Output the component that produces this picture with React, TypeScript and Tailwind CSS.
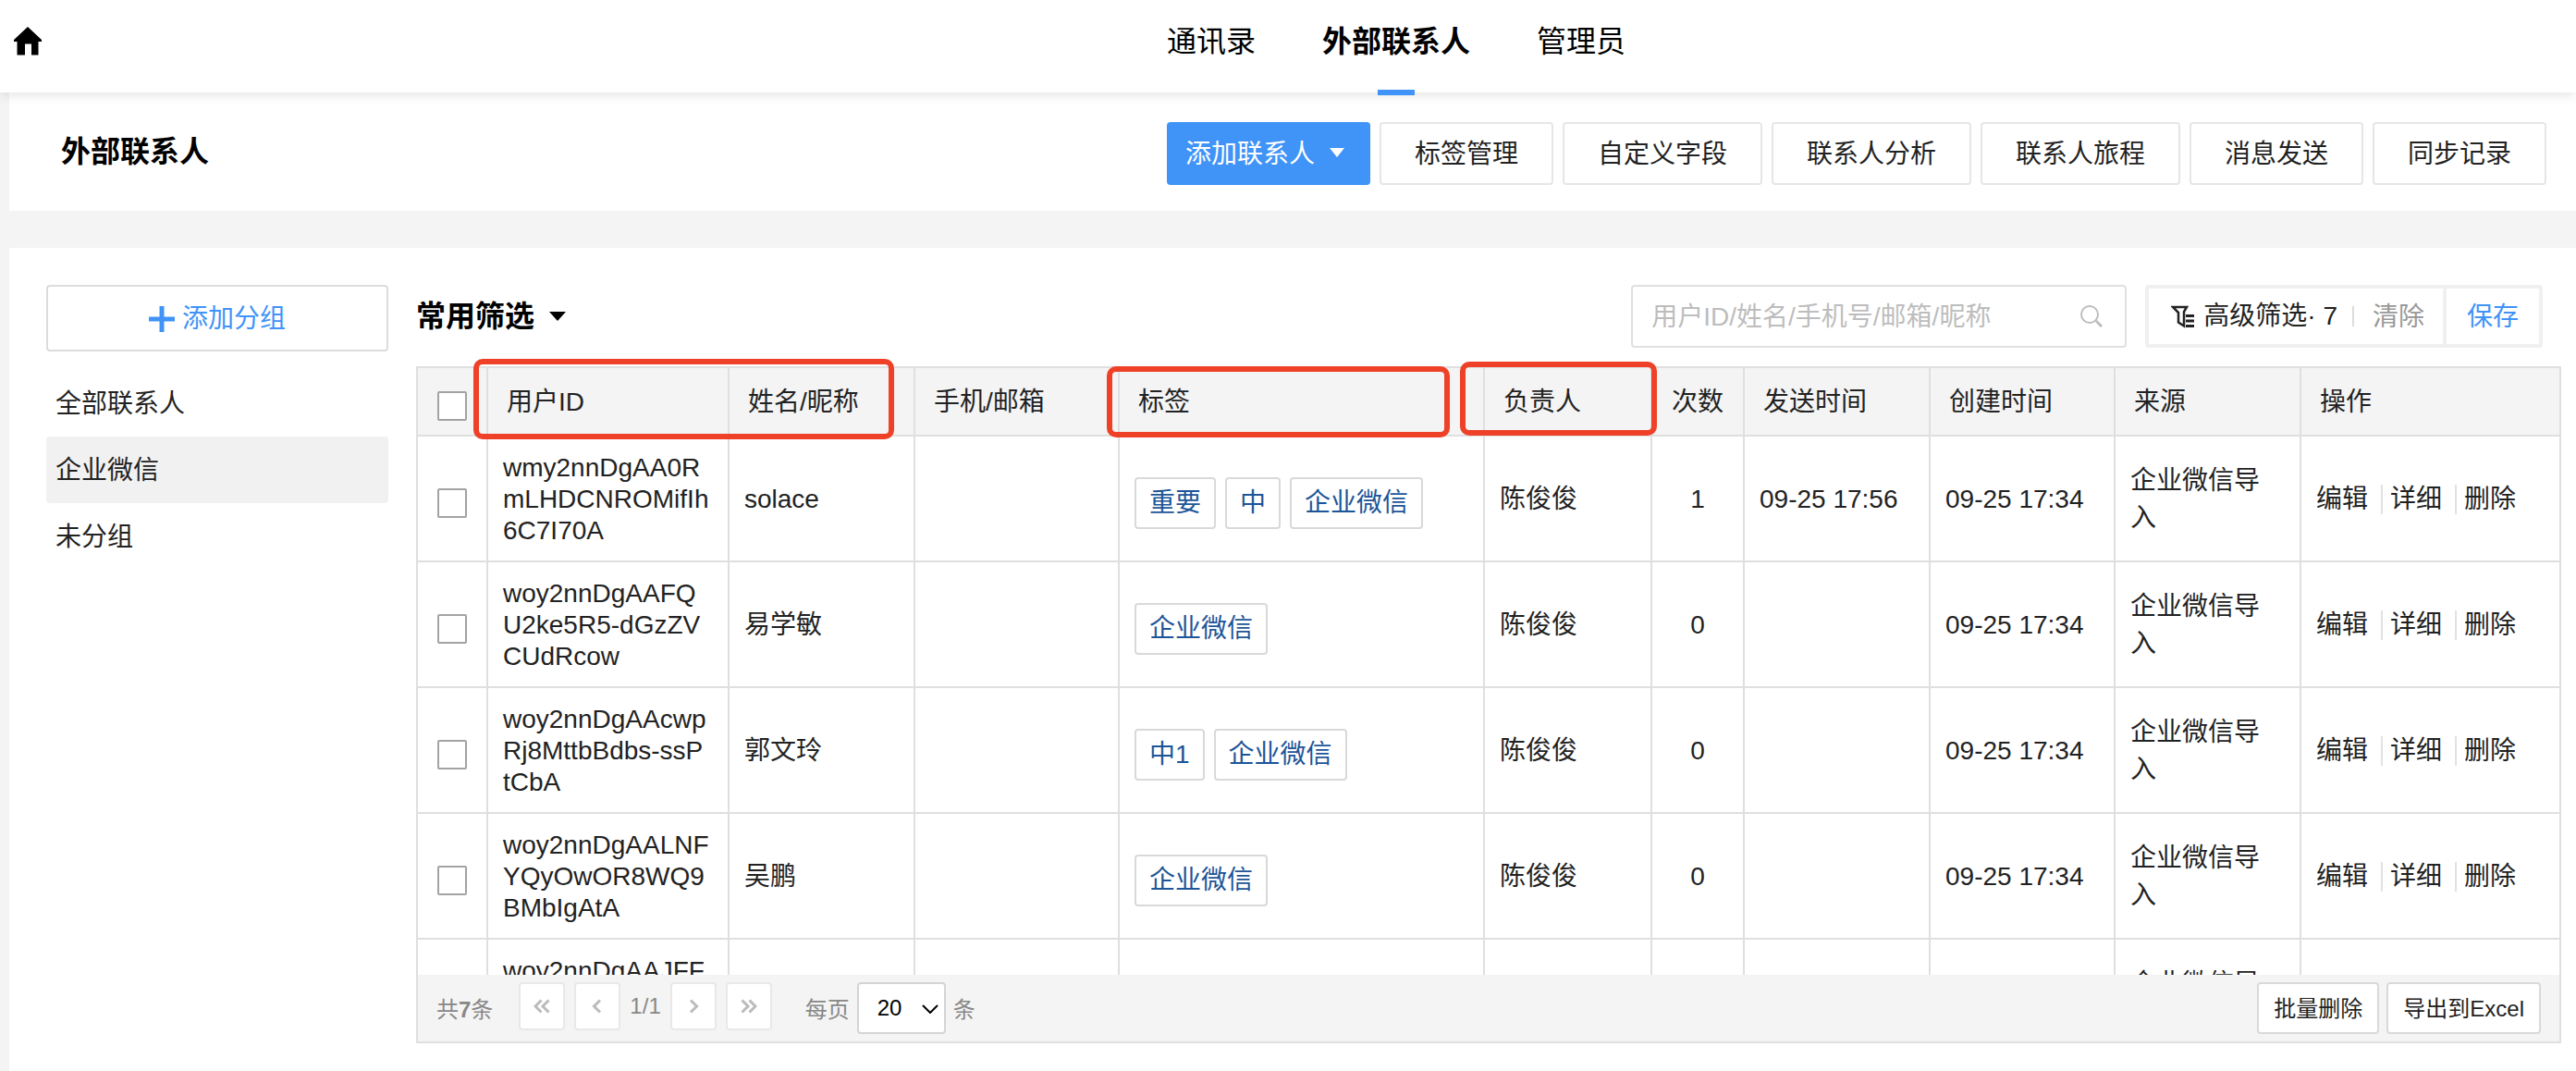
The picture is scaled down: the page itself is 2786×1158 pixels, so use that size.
import type { ReactNode } from 'react';

interface Contact {
  id: string;
  name: string;
  tags: string[];
  owner: string;
  count: number;
  sentAt: string;
  createdAt: string;
  source: string;
}

const tabs = ['通讯录', '外部联系人', '管理员'];
const toolbar = ['标签管理', '自定义字段', '联系人分析', '联系人旅程', '消息发送', '同步记录'];
const groups = ['全部联系人', '企业微信', '未分组'];
const actions = ['编辑', '详细', '删除'];

const columns = [
  { label: '用户ID', width: 'w-[261px]' },
  { label: '姓名/昵称', width: 'w-[201px]' },
  { label: '手机/邮箱', width: 'w-[221px]' },
  { label: '标签', width: '' },
  { label: '负责人', width: 'w-[181px]' },
  { label: '次数', width: 'w-[100px]' },
  { label: '发送时间', width: 'w-[201px]' },
  { label: '创建时间', width: 'w-[200px]' },
  { label: '来源', width: 'w-[201px]' },
  { label: '操作', width: 'w-[279px]' },
];

const contacts: Contact[] = [
  {
    id: 'wmy2nnDgAA0RmLHDCNROMifIh6C7I70A',
    name: 'solace',
    tags: ['重要', '中', '企业微信'],
    owner: '陈俊俊',
    count: 1,
    sentAt: '09-25 17:56',
    createdAt: '09-25 17:34',
    source: '企业微信导入',
  },
  {
    id: 'woy2nnDgAAFQU2ke5R5-dGzZVCUdRcow',
    name: '易学敏',
    tags: ['企业微信'],
    owner: '陈俊俊',
    count: 0,
    sentAt: '',
    createdAt: '09-25 17:34',
    source: '企业微信导入',
  },
  {
    id: 'woy2nnDgAAcwpRj8MttbBdbs-ssPtCbA',
    name: '郭文玲',
    tags: ['中1', '企业微信'],
    owner: '陈俊俊',
    count: 0,
    sentAt: '',
    createdAt: '09-25 17:34',
    source: '企业微信导入',
  },
  {
    id: 'woy2nnDgAALNFYQyOwOR8WQ9BMbIgAtA',
    name: '吴鹏',
    tags: ['企业微信'],
    owner: '陈俊俊',
    count: 0,
    sentAt: '',
    createdAt: '09-25 17:34',
    source: '企业微信导入',
  },
  {
    id: 'woy2nnDgAAJFFQk3WcT8nVb5RmZyLd7A',
    name: '',
    tags: [],
    owner: '',
    count: 0,
    sentAt: '',
    createdAt: '',
    source: '企业微信导入',
  },
];

function Header() {
  return (
    <header className="relative z-10 flex h-[100px] shrink-0 bg-white shadow-[0_2px_12px_rgba(0,0,0,0.12)]">
      <div className="w-[234px] pt-[29px] pl-[15px]">
        <a href="#home" aria-label="首页" className="block w-[30px]">
          <svg width="30" height="31" viewBox="0 0 30 31" fill="#000">
            <path d="M15 0L30 14v2h-3.500v14.500h-7.500V18.500h-7v12H3.500V16H0v-2z" />
          </svg>
        </a>
      </div>
      <nav className="flex flex-1 justify-center gap-[72px] pt-[5px] text-[32px] leading-10 text-black">
        {tabs.map((tab) => {
          const active = tab === '外部联系人';
          return (
            <a key={tab} href="#tab" className="relative h-[98px] pt-5">
              <span className={active ? 'font-bold' : ''}>{tab}</span>
              {active && (
                <span className="absolute bottom-0 left-1/2 h-1.5 w-10 -translate-x-1/2 bg-[#4093f7]" />
              )}
            </a>
          );
        })}
      </nav>
    </header>
  );
}

function TitleBar() {
  return (
    <section className="flex h-32 shrink-0 items-center justify-between bg-white pr-8 pl-14">
      <h1 className="text-[32px] leading-10 font-bold text-black">外部联系人</h1>
      <div className="flex gap-2.5 pt-1">
        <button className="flex h-[68px] w-[220px] items-center gap-4 rounded-sm bg-[#4093f7] pt-0.5 pl-5 text-white">
          添加联系人
          <svg className="mb-1" width="16" height="10" viewBox="0 0 16 10" fill="currentColor">
            <path d="M0 0h16L8 10z" />
          </svg>
        </button>
        {toolbar.map((label) => (
          <button key={label} className="h-[68px] rounded-sm border-2 border-[#e6e6e6] px-9 pt-0.5">
            {label}
          </button>
        ))}
      </div>
    </section>
  );
}

function Sidebar() {
  return (
    <aside className="w-[370px] shrink-0">
      <button className="flex h-[72px] w-full items-center justify-center gap-2 rounded-sm border-2 border-[#dcdcdc] pt-0.5 text-[#4093f7]">
        <svg width="28" height="28" viewBox="0 0 28 28" fill="none" stroke="currentColor" strokeWidth="5">
          <path d="M14 0v28M0 14h28" />
        </svg>
        添加分组
      </button>
      <ul className="mt-5">
        {groups.map((group) => (
          <li key={group}>
            <a
              href="#group"
              className={`flex h-[72px] items-center rounded-sm px-2.5 pt-0.5 ${group === '企业微信' ? 'bg-[#f1f1f1]' : ''}`}
            >
              {group}
            </a>
          </li>
        ))}
      </ul>
    </aside>
  );
}

function FilterBar() {
  return (
    <div className="flex h-[68px] shrink-0 items-center pr-5">
      <button className="mr-auto flex items-center gap-4 text-[32px] leading-10 font-bold text-black">
        常用筛选
        <svg width="18" height="10" viewBox="0 0 18 10" fill="currentColor">
          <path d="M0 0h18L9 10z" />
        </svg>
      </button>
      <div className="flex h-full w-[536px] items-center rounded-sm border-2 border-[#e0e0e0] pr-6 pl-5">
        <input
          type="text"
          aria-label="搜索"
          placeholder="用户ID/姓名/手机号/邮箱/昵称"
          className="min-w-0 flex-1 pt-0.5 outline-none placeholder:text-[#bdbdbd]"
        />
        <svg width="24" height="24" viewBox="0 0 24 24" fill="none" stroke="#bdbdbd" strokeWidth="2">
          <circle cx="10" cy="10" r="9" />
          <path d="M17 17l6 6" strokeWidth="3" />
        </svg>
      </div>
      <div className="ml-5 flex h-full items-center rounded-sm border-4 border-[#f0f0f0]">
        <button className="flex items-center pl-6">
          <svg
            className="mr-2.5"
            width="25"
            height="25"
            viewBox="0 0 25 25"
            fill="none"
            stroke="#222"
            strokeWidth="2.5"
          >
            <path d="M2 2h15l-3 5v15.500l-6-4V8L2 2z" />
            <path d="M16 11.500h9M16 17h9M16 22.500h9" strokeWidth="3" />
          </svg>
          高级筛选· 7
        </button>
        <span className="mr-5 ml-4 h-[22px] w-0.5 bg-[#dcdcdc]" />
        <button className="h-full border-r-4 border-[#f0f0f0] pt-0.5 pr-5 text-[#999]">清除</button>
        <button className="px-[22px] pt-0.5 text-[#4093f7]">保存</button>
      </div>
    </div>
  );
}

function Cell({ children, className = 'px-4' }: { children?: ReactNode; className?: string }) {
  return (
    <td className={`border-r-2 border-b-2 border-[#dfdfdf] pt-0.5 last:border-r-0 ${className}`}>
      {children}
    </td>
  );
}

function Check({ label }: { label: string }) {
  return (
    <input
      type="checkbox"
      aria-label={label}
      className="mx-auto mt-2 block size-8 appearance-none rounded-xs border-2 border-[#a3a3a3] bg-white"
    />
  );
}

function ContactTable() {
  return (
    <table className="w-full table-fixed border-separate border-spacing-0">
      <thead className="bg-[#f4f4f4]">
        <tr className="h-[74px]">
          <th className="w-[76px] border-r-2 border-b-2 border-[#dfdfdf] pt-0.5">
            <Check label="全选" />
          </th>
          {columns.map((col) => (
            <th
              key={col.label}
              className={`border-r-2 border-b-2 border-[#dfdfdf] pt-0.5 font-normal last:border-r-0 ${col.width} ${
                col.label === '次数' ? 'text-center' : 'px-5 text-left'
              }`}
            >
              {col.label}
            </th>
          ))}
        </tr>
      </thead>
      <tbody>
        {contacts.map((contact) => (
          <tr key={contact.id} className="h-[136px]">
            <Cell>
              <Check label={contact.id} />
            </Cell>
            <Cell className="pr-5 pl-4 leading-[34px] break-all">{contact.id}</Cell>
            <Cell>{contact.name}</Cell>
            <Cell />
            <Cell>
              <div className="flex gap-2.5 pt-2">
                {contact.tags.map((tag) => (
                  <span
                    key={tag}
                    className="flex h-14 items-center rounded-sm border-2 border-[#d9d9d9] px-3.5 text-[#1c5598]"
                  >
                    {tag}
                  </span>
                ))}
              </div>
            </Cell>
            <Cell>{contact.owner}</Cell>
            <Cell className="text-center">{contact.count}</Cell>
            <Cell>{contact.sentAt}</Cell>
            <Cell>{contact.createdAt}</Cell>
            <Cell>{contact.source}</Cell>
            <Cell>
              <div className="flex h-8 items-center divide-x-2 divide-[#e2e2e2]">
                {actions.map((action) => (
                  <a key={action} href="#action" className="pr-3.5 leading-8 not-first:pl-2">
                    {action}
                  </a>
                ))}
              </div>
            </Cell>
          </tr>
        ))}
      </tbody>
    </table>
  );
}

function PageButton({ label, path }: { label: string; path: string }) {
  return (
    <button
      aria-label={label}
      className="flex h-[52px] w-[50px] items-center justify-center rounded-sm border-2 border-[#e8e8e8] bg-white"
    >
      <svg width="18" height="16" viewBox="0 0 18 16" fill="none" stroke="#bbb" strokeWidth="3">
        <path d={path} />
      </svg>
    </button>
  );
}

function Footer() {
  return (
    <div className="flex h-[72px] shrink-0 items-start bg-[#f4f4f4] pt-2 pr-5 pl-5 text-2xl text-[#888]">
      <span className="pt-0.5 leading-[56px]">
        共<b>7</b>条
      </span>
      <div className="ml-7 flex items-center gap-2.5">
        <PageButton label="第一页" path="M8.500 1.500L2 8l6.500 6.500M16.500 1.500L10 8l6.500 6.500" />
        <PageButton label="上一页" path="M12 1.500L5.500 8l6.500 6.500" />
        <span>1/1</span>
        <PageButton label="下一页" path="M6 1.500L12.500 8L6 14.500" />
        <PageButton label="最后一页" path="M1.500 1.500L8 8l-6.500 6.500M9.500 1.500L16 8l-6.500 6.500" />
      </div>
      <label htmlFor="page-size" className="ml-9 pt-0.5 leading-[56px]">
        每页
      </label>
      <div className="relative mx-2">
        <select
          id="page-size"
          className="h-14 w-24 appearance-none rounded-sm border-2 border-[#d4d4d4] bg-white pl-5 text-black"
        >
          <option>20</option>
        </select>
        <svg
          className="pointer-events-none absolute top-6 right-2"
          width="18"
          height="10"
          viewBox="0 0 18 10"
          fill="none"
          stroke="#000"
          strokeWidth="2"
        >
          <path d="M1 1l8 8 8-8" />
        </svg>
      </div>
      <span className="pt-0.5 leading-[56px]">条</span>
      <div className="ml-auto flex gap-2 text-[#222]">
        {['批量删除', '导出到Excel'].map((label) => (
          <button key={label} className="h-14 rounded-sm border-2 border-[#d9d9d9] bg-white px-4 pt-0.5">
            {label}
          </button>
        ))}
      </div>
    </div>
  );
}

export default function App() {
  return (
    <div className="flex h-screen flex-col bg-[#f4f4f4] font-['Liberation_Sans','Noto_Sans_CJK_SC',sans-serif] text-[28px] leading-10 text-[#222]">
      <Header />
      <main className="flex min-h-0 flex-1 flex-col gap-10 pl-2.5">
        <TitleBar />
        <section className="flex min-h-0 flex-1 gap-[30px] bg-white pt-10 pr-4 pb-[30px] pl-10">
          <Sidebar />
          <div className="flex min-w-0 flex-1 flex-col gap-5">
            <FilterBar />
            <div className="relative flex min-h-0 flex-1 flex-col border-2 border-[#dfdfdf]">
              <div className="min-h-0 flex-1 overflow-hidden">
                <ContactTable />
              </div>
              <Footer />

              {/* Callouts over the header row */}
              <div className="absolute -top-2.5 left-[60px] h-[87px] w-[455px] rounded-[10px] border-6 border-[#ee4128]" />
              <div className="absolute -top-0.5 left-[745px] h-[77px] w-[371px] rounded-[10px] border-6 border-[#ee4128]" />
              <div className="absolute -top-[7px] left-[1127px] h-20 w-[213px] rounded-[10px] border-6 border-[#ee4128]" />
            </div>
          </div>
        </section>
      </main>
    </div>
  );
}
